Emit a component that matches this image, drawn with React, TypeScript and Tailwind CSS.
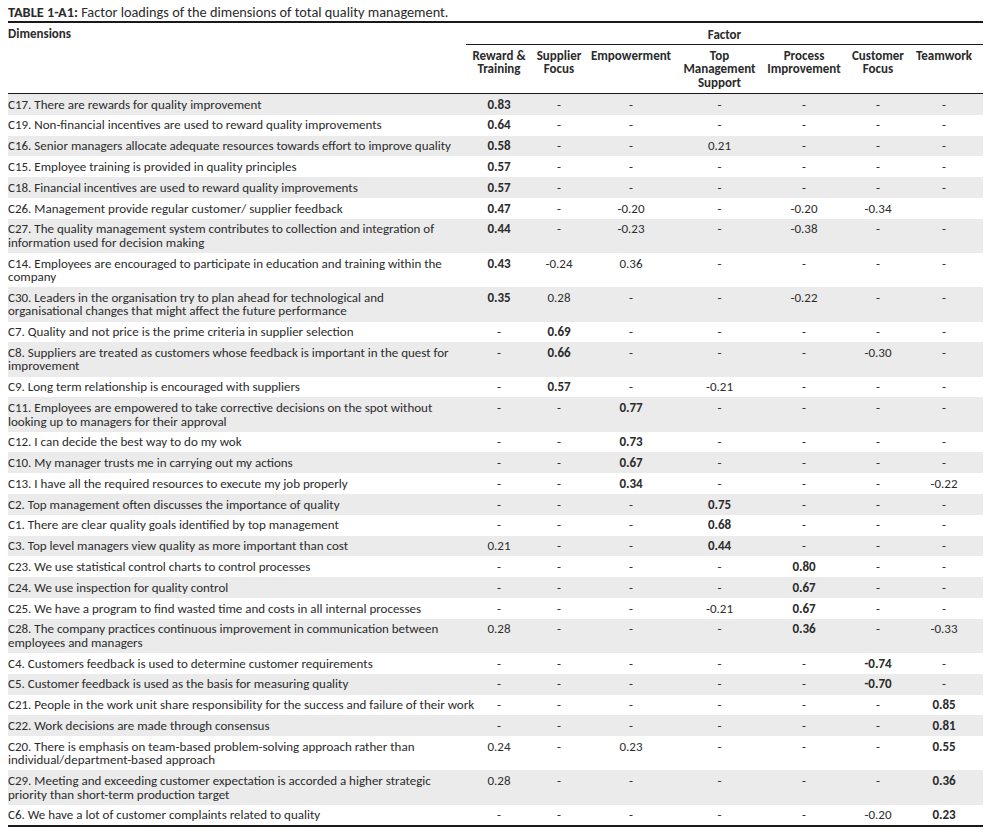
const factors = [
  ["Reward &", "Training"],
  ["Supplier", "Focus"],
  ["Empowerment"],
  ["Top", "Management", "Support"],
  ["Process", "Improvement"],
  ["Customer", "Focus"],
  ["Teamwork"],
];

// "*" marks a bold loading
const rows: { text: string[]; values: string[] }[] = [
  { text: ["C17. There are rewards for quality improvement"], values: ["*0.83", "-", "-", "-", "-", "-", "-"] },
  { text: ["C19. Non-financial incentives are used to reward quality improvements"], values: ["*0.64", "-", "-", "-", "-", "-", "-"] },
  { text: ["C16. Senior managers allocate adequate resources towards effort to improve quality"], values: ["*0.58", "-", "-", "0.21", "-", "-", "-"] },
  { text: ["C15. Employee training is provided in quality principles"], values: ["*0.57", "-", "-", "-", "-", "-", "-"] },
  { text: ["C18. Financial incentives are used to reward quality improvements"], values: ["*0.57", "-", "-", "-", "-", "-", "-"] },
  { text: ["C26. Management provide regular customer/ supplier feedback"], values: ["*0.47", "-", "-0.20", "-", "-0.20", "-0.34", ""] },
  { text: ["C27. The quality management system contributes to collection and integration of", "information used for decision making"], values: ["*0.44", "-", "-0.23", "-", "-0.38", "-", "-"] },
  { text: ["C14. Employees are encouraged to participate in education and training within the", "company"], values: ["*0.43", "-0.24", "0.36", "-", "-", "-", "-"] },
  { text: ["C30. Leaders in the organisation try to plan ahead for technological and", "organisational changes that might affect the future performance"], values: ["*0.35", "0.28", "-", "-", "-0.22", "-", "-"] },
  { text: ["C7. Quality and not price is the prime criteria in supplier selection"], values: ["-", "*0.69", "-", "-", "-", "-", "-"] },
  { text: ["C8. Suppliers are treated as customers whose feedback is important in the quest for", "improvement"], values: ["-", "*0.66", "-", "-", "-", "-0.30", "-"] },
  { text: ["C9. Long term relationship is encouraged with suppliers"], values: ["-", "*0.57", "-", "-0.21", "-", "-", "-"] },
  { text: ["C11. Employees are empowered to take corrective decisions on the spot without", "looking up to managers for their approval"], values: ["-", "-", "*0.77", "-", "-", "-", "-"] },
  { text: ["C12. I can decide the best way to do my wok"], values: ["-", "-", "*0.73", "-", "-", "-", "-"] },
  { text: ["C10. My manager trusts me in carrying out my actions"], values: ["-", "-", "*0.67", "-", "-", "-", "-"] },
  { text: ["C13. I have all the required resources to execute my job properly"], values: ["-", "-", "*0.34", "-", "-", "-", "-0.22"] },
  { text: ["C2. Top management often discusses the importance of quality"], values: ["-", "-", "-", "*0.75", "-", "-", "-"] },
  { text: ["C1. There are clear quality goals identified by top management"], values: ["-", "-", "-", "*0.68", "-", "-", "-"] },
  { text: ["C3. Top level managers view quality as more important than cost"], values: ["0.21", "-", "-", "*0.44", "-", "-", "-"] },
  { text: ["C23. We use statistical control charts to control processes"], values: ["-", "-", "-", "-", "*0.80", "-", "-"] },
  { text: ["C24. We use inspection for quality control"], values: ["-", "-", "-", "-", "*0.67", "-", "-"] },
  { text: ["C25. We have a program to find wasted time and costs in all internal processes"], values: ["-", "-", "-", "-0.21", "*0.67", "-", "-"] },
  { text: ["C28. The company practices continuous improvement in communication between", "employees and managers"], values: ["0.28", "-", "-", "-", "*0.36", "-", "-0.33"] },
  { text: ["C4. Customers feedback is used to determine customer requirements"], values: ["-", "-", "-", "-", "-", "*-0.74", "-"] },
  { text: ["C5. Customer feedback is used as the basis for measuring quality"], values: ["-", "-", "-", "-", "-", "*-0.70", "-"] },
  { text: ["C21. People in the work unit share responsibility for the success and failure of their work"], values: ["-", "-", "-", "-", "-", "-", "*0.85"] },
  { text: ["C22. Work decisions are made through consensus"], values: ["-", "-", "-", "-", "-", "-", "*0.81"] },
  { text: ["C20. There is emphasis on team-based problem-solving approach rather than", "individual/department-based approach"], values: ["0.24", "-", "0.23", "-", "-", "-", "*0.55"] },
  { text: ["C29. Meeting and exceeding customer expectation is accorded a higher strategic", "priority than short-term production target"], values: ["0.28", "-", "-", "-", "-", "-", "*0.36"] },
  { text: ["C6. We have a lot of customer complaints related to quality"], values: ["-", "-", "-", "-", "-", "-0.20", "*0.23"] },
];

export default function App() {
  return (
    <div
      className="min-h-screen bg-white px-2 pt-[4px] text-[#2b2b2b]"
      style={{ fontFamily: "Calibri, Carlito, 'Open Sans', sans-serif" }}
    >
      {/* Caption */}
      <div className="w-[975px] text-[14.3px] leading-[16px] pb-[1px] whitespace-nowrap">
        <span className="font-bold">TABLE 1-A1:</span> Factor loadings of the
        dimensions of total quality management.
      </div>

      <table className="w-[975px] table-fixed border-collapse border-t-2 border-b-2 border-[#1a1a1a] text-[13px] leading-[13.5px]">
        <colgroup>
          <col className="w-[458px]" />
          <col className="w-[66px]" />
          <col className="w-[54px]" />
          <col className="w-[90px]" />
          <col className="w-[87px]" />
          <col className="w-[82px]" />
          <col className="w-[66px]" />
          <col className="w-[72px]" />
        </colgroup>
        <thead>
          <tr>
            <th rowSpan={2} className="text-left align-top font-bold pt-[4px] border-b border-[#1a1a1a]">
              Dimensions
            </th>
            <th colSpan={7} className="font-bold text-center pt-[5px] pb-[2px] pr-[6px]">
              <div className="border-b border-[#1a1a1a] -mr-[6px] pb-[2px]">Factor</div>
            </th>
          </tr>
          <tr className="border-b border-[#1a1a1a]">
            {factors.map((f, i) => (
              <th
                key={i}
                className={`align-top font-bold text-center pt-[2px] pb-[4px] ${i === 6 ? "pr-[6px]" : ""}`}
              >
                {f.map((l) => (
                  <div key={l} className="whitespace-nowrap">{l}</div>
                ))}
                {f.length < 3 && <div>&nbsp;</div>}
                {f.length < 2 && <div>&nbsp;</div>}
              </th>
            ))}
          </tr>
        </thead>
        <tbody>
          {rows.map((r, i) => (
            <tr key={i} className={i % 2 === 0 ? "bg-[#ebebeb]" : "bg-white"}>
              <td className="align-top py-[3.65px] whitespace-nowrap">
                {r.text.map((l) => (
                  <div key={l}>{l}</div>
                ))}
              </td>
              {r.values.map((v, j) => (
                <td
                  key={j}
                  className={`align-top text-center py-[3.65px] ${v.startsWith("*") ? "font-bold" : ""} ${j === 6 ? "pr-[6px]" : ""}`}
                >
                  {v.replace("*", "")}
                </td>
              ))}
            </tr>
          ))}
        </tbody>
      </table>
    </div>
  );
}
